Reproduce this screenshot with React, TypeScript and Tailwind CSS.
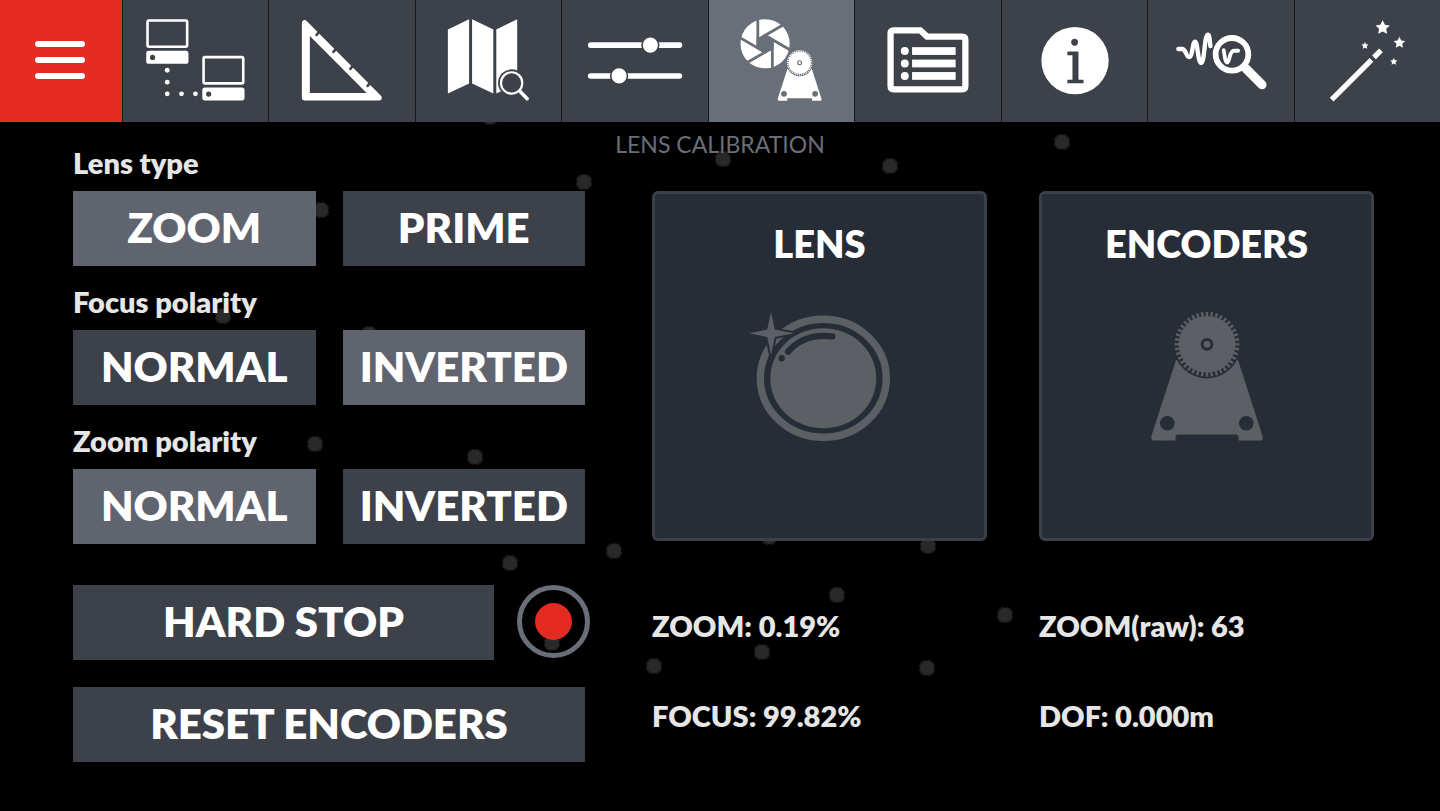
import { useState } from 'react'
import type { ReactNode } from 'react'
import clsx from 'clsx'

type TabId =
  | 'network'
  | 'geometry'
  | 'map'
  | 'settings'
  | 'lens'
  | 'files'
  | 'info'
  | 'analysis'
  | 'wizard'

interface ToggleGroupProps {
  label: string
  options: string[]
  value: string
  onChange: (value: string) => void
}

// Tracking markers of the camera view behind the panel
const MARKERS = [
  [490, 117], [584, 182], [321, 210], [223, 316], [369, 334],
  [315, 444], [475, 457], [510, 563], [614, 551], [552, 643],
  [723, 159], [890, 166], [1062, 142], [769, 537], [928, 546],
  [837, 595], [1005, 615], [762, 652], [654, 666], [927, 668],
]

const STAR = 'M0 -1 L.3 -.38 L.95 -.31 L.47 .15 L.59 .81 L0 .5 L-.59 .81 L-.47 .15 L-.95 -.31 L-.3 -.38 Z'

// Icons share a 146x122 canvas. Cut-outs use currentColor, which is the tab's own background.
function TabIcon({ children }: { children: ReactNode }) {
  return (
    <svg viewBox="0 0 146 122" className="w-full h-full" fill="white" aria-hidden="true">
      {children}
    </svg>
  )
}

function Computer({ x, y }: { x: number; y: number }) {
  return (
    <g transform={`translate(${x} ${y})`}>
      <rect x="1.3" y="1.3" width="39.8" height="26.4" rx="1.5" fill="none" stroke="white" strokeWidth="2.6" />
      <rect x="0" y="31.8" width="42.4" height="13" rx="2.6" />
      <circle cx="6.4" cy="38.4" r="2.6" fill="currentColor" />
    </g>
  )
}

function NetworkIcon() {
  return (
    <TabIcon>
      <Computer x={23.3} y={19} />
      <Computer x={79.6} y={55.8} />
      {[[44.4, 70.3], [44.4, 82.3], [44.4, 94], [58.7, 94], [72.7, 94]].map(([cx, cy]) => (
        <circle key={`${cx}-${cy}`} cx={cx} cy={cy} r="2.4" />
      ))}
    </TabIcon>
  )
}

function GeometryIcon() {
  return (
    <TabIcon>
      <path
        fillRule="evenodd"
        d="M33 22.5a2.7 2.7 0 0 1 4.6 -1.8L112.6 96.2a2.7 2.7 0 0 1 -1.8 4.5H35.5a2.5 2.5 0 0 1 -2.5 -2.5ZM41 36V93H98Z"
      />
      <g stroke="currentColor" strokeWidth="2.6" strokeLinecap="round">
        <path d="M50.5 31.5l-2.8 3.4M67.5 48.5l-2.8 3.4M84.5 65.5l-2.8 3.4M101.8 82.6l-2.8 3.4" />
      </g>
    </TabIcon>
  )
}

function MapIcon() {
  return (
    <TabIcon>
      <path d="M32 29.3L53.3 19V83.7L32 93.7Z" />
      <path d="M56.3 19L77.6 29.3V93.7L56.3 83.7Z" />
      <path d="M80.6 29.3L101.6 19V83.7L80.6 93.7Z" />
      <circle cx="96" cy="83" r="13.6" fill="currentColor" />
      <circle cx="96" cy="83" r="10.7" fill="none" stroke="white" strokeWidth="2.2" />
      <path d="M104.8 91.8L111.6 98.8" stroke="white" strokeWidth="3.6" strokeLinecap="round" />
    </TabIcon>
  )
}

function SettingsIcon() {
  return (
    <TabIcon>
      <rect x="26" y="42.2" width="94.7" height="5.7" rx="2.8" />
      <rect x="26" y="73.2" width="94.7" height="5.7" rx="2.8" />
      <g stroke="currentColor" strokeWidth="1.6">
        <circle cx="88.7" cy="45" r="8.4" />
        <circle cx="57.3" cy="76" r="8.4" />
      </g>
    </TabIcon>
  )
}

// Geared encoder on its foot, drawn on a 112x129 canvas
function EncoderShape({ cutout }: { cutout: string }) {
  return (
    <>
      <path d="M25 48L0.6 123.5Q-0.8 128.5 3.5 128.5H24.5V125Q24.5 122.5 27 122.5H85Q87.5 122.5 87.5 125V128.5H108.5Q112.8 128.5 111.4 123.5L87 48Z" />
      <g fill={cutout}>
        <circle cx="56" cy="32.8" r="33.6" />
        <circle cx="16.3" cy="111.3" r="7.3" />
        <circle cx="95.3" cy="111.3" r="7.3" />
      </g>
      <circle cx="56" cy="32.3" r="28.4" />
      <circle
        cx="56"
        cy="32.3"
        r="30.2"
        fill="none"
        stroke="var(--shape)"
        strokeWidth="4.4"
        pathLength={80}
        strokeDasharray="1 1"
        strokeDashoffset="0.5"
      />
      <circle cx="56" cy="32.3" r="4.9" fill="none" stroke={cutout} strokeWidth="3" />
    </>
  )
}

function LensIcon() {
  return (
    <TabIcon>
      <g transform="translate(56.3 43.7)">
        <circle r="24.7" />
        <path d="M0 -9.8L8.5 -4.9V4.9L0 9.8L-8.5 4.9V-4.9Z" fill="currentColor" />
        {[0, 60, 120, 180, 240, 300].map((angle) => (
          <path
            key={angle}
            d="M-7.3 -26V4"
            stroke="currentColor"
            strokeWidth="2.8"
            transform={`rotate(${angle})`}
          />
        ))}
      </g>
      <g transform="translate(68.8 49.9) scale(0.396)" className="[--shape:white]">
        <EncoderShape cutout="currentColor" />
      </g>
    </TabIcon>
  )
}

function FilesIcon() {
  return (
    <TabIcon>
      <path
        d="M39 30.2H65.5L72.3 36.5H107.5Q110.8 36.5 110.8 39.8V86.2Q110.8 89.5 107.5 89.5H39Q35.7 89.5 35.7 86.2V33.5Q35.7 30.2 39 30.2Z"
        fill="none"
        stroke="white"
        strokeWidth="6.3"
      />
      {[51, 63.5, 76].map((y) => (
        <g key={y}>
          <circle cx="50" cy={y} r="4" />
          <rect x="57.3" y={y - 3.9} width="43.7" height="7.8" />
        </g>
      ))}
    </TabIcon>
  )
}

function InfoIcon() {
  return (
    <TabIcon>
      <circle cx="73.3" cy="60.7" r="33.8" />
      <text
        x="73.3"
        y="83"
        textAnchor="middle"
        fill="currentColor"
        stroke="currentColor"
        strokeWidth="0.4"
        fontSize="60"
        className="font-['DejaVu_Serif',serif]"
      >
        i
      </text>
    </TabIcon>
  )
}

function AnalysisIcon() {
  return (
    <TabIcon>
      <g fill="none" stroke="white" strokeLinecap="round" strokeLinejoin="round">
        <path
          d="M30.5 49H34C38.5 49 38 57 41.3 57C45 57 44.5 41.5 47.3 41.5C50 41.5 50 63 53.3 63C57 63 56.5 34.5 60 34.5C62 34.5 61.7 40 62.7 46"
          strokeWidth="4.4"
        />
        <path d="M76 50C77 56 77.5 62.5 79.5 62.5C82.5 62.5 81 50.7 86.5 50.7H90.5" strokeWidth="3.8" />
        <circle cx="84.3" cy="54.3" r="16.4" strokeWidth="5.8" />
        <path d="M98 68.3L114.5 84.8" strokeWidth="9" />
      </g>
    </TabIcon>
  )
}

function WizardIcon() {
  return (
    <TabIcon>
      <g stroke="white" strokeWidth="5.3">
        <path d="M36.8 99.8L76.8 59.8" />
        <path d="M79.3 57.3L86.3 50.3" />
      </g>
      <path d={STAR} transform="translate(88 27.6) scale(7.6)" />
      <path d={STAR} transform="translate(104.8 42.7) scale(6.1)" />
      <path d={STAR} transform="translate(70.2 45.7) scale(3.8)" />
      <path d={STAR} transform="translate(99.2 61.7) scale(3.8)" />
    </TabIcon>
  )
}

function LensGlass() {
  return (
    <svg viewBox="0 0 141 129" className="w-[141px] h-[129px]" fill="#5c5f64" aria-hidden="true">
      <ellipse cx="74.3" cy="66.3" rx="63" ry="59" fill="none" stroke="#5c5f64" strokeWidth="7.4" />
      <ellipse cx="74.3" cy="66.3" rx="53" ry="50" />
      <path d="M39 39.7Q55 21 83.3 24.3" fill="none" stroke="#272d37" strokeWidth="6.3" strokeLinecap="round" />
      <circle cx="32.7" cy="46.3" r="3.2" fill="#272d37" />
      <path
        d="M22 0L25.8 17.6L45 21.3L25.8 25L22 43L18.2 25L0 21.3L18.2 17.6Z"
        stroke="#272d37"
        strokeWidth="4"
        paintOrder="stroke"
      />
    </svg>
  )
}

function EncoderGear() {
  return (
    <svg viewBox="0 0 112 129" className="w-[112px] h-[129px] [--shape:#5c5f64]" fill="#5c5f64" aria-hidden="true">
      <EncoderShape cutout="#272d37" />
    </svg>
  )
}

const TABS: { id: TabId; name: string; icon: ReactNode }[] = [
  { id: 'network', name: 'Network', icon: <NetworkIcon /> },
  { id: 'geometry', name: 'Geometry', icon: <GeometryIcon /> },
  { id: 'map', name: 'Map', icon: <MapIcon /> },
  { id: 'settings', name: 'Settings', icon: <SettingsIcon /> },
  { id: 'lens', name: 'Lens calibration', icon: <LensIcon /> },
  { id: 'files', name: 'Files', icon: <FilesIcon /> },
  { id: 'info', name: 'Info', icon: <InfoIcon /> },
  { id: 'analysis', name: 'Analysis', icon: <AnalysisIcon /> },
  { id: 'wizard', name: 'Wizard', icon: <WizardIcon /> },
]

function TrackingMarkers() {
  return (
    <svg
      viewBox="0 0 1440 811"
      preserveAspectRatio="xMidYMid slice"
      className="absolute inset-0 w-full h-full"
      aria-hidden="true"
    >
      {MARKERS.map(([x, y]) => (
        <g key={`${x}-${y}`} transform={`translate(${x} ${y})`}>
          <circle r="7.2" fill="#292929" />
          <circle
            r="7.6"
            fill="none"
            stroke="#222222"
            strokeWidth="1.2"
            pathLength={16}
            strokeDasharray="3.2 0.8"
            strokeDashoffset="-0.4"
          />
        </g>
      ))}
    </svg>
  )
}

function ToggleGroup({ label, options, value, onChange }: ToggleGroupProps) {
  return (
    <div role="group" aria-label={label}>
      <h2 className="text-[29px] leading-8 font-extrabold text-[#e6e6e6] mb-3">{label}</h2>
      <div className="grid grid-cols-2 gap-[27px]">
        {options.map((option) => (
          <button
            key={option}
            aria-pressed={option === value}
            onClick={() => onChange(option)}
            className={clsx(
              'h-[75px] pb-1 text-[42px] leading-none font-extrabold cursor-pointer',
              option === value ? 'bg-[#5f646f]' : 'bg-[#3d4149]'
            )}
          >
            {option}
          </button>
        ))}
      </div>
    </div>
  )
}

function Panel({ title, children }: { title: string; children: ReactNode }) {
  return (
    <button className="h-[350px] pt-6 flex flex-col items-center justify-start gap-11 bg-[#272d37] border-3 border-[#3b3f48] rounded-md cursor-pointer">
      <span className="text-[38px] leading-[50px] font-extrabold">{title}</span>
      {children}
    </button>
  )
}

export default function App() {
  const [activeTab, setActiveTab] = useState<TabId>('lens')
  const [lensType, setLensType] = useState('ZOOM')
  const [focusPolarity, setFocusPolarity] = useState('INVERTED')
  const [zoomPolarity, setZoomPolarity] = useState('NORMAL')
  const [recording, setRecording] = useState(false)

  return (
    <div className="relative min-h-screen bg-black text-white font-[Lato,sans-serif]">
      <TrackingMarkers />

      <nav className="relative flex h-[122px]">
        <button aria-label="Menu" className="w-[122px] pr-0.5 pb-0.5 shrink-0 flex flex-col items-center justify-center gap-[10px] bg-[#e42b22] cursor-pointer">
          <span className="w-[50px] h-[6px] rounded-full bg-white" />
          <span className="w-[50px] h-[6px] rounded-full bg-white" />
          <span className="w-[50px] h-[6px] rounded-full bg-white" />
        </button>
        {TABS.map((tab) => (
          <button
            key={tab.id}
            aria-label={tab.name}
            onClick={() => setActiveTab(tab.id)}
            className={clsx(
              'flex-1 min-w-0 border-l border-[#17181b] cursor-pointer',
              tab.id === activeTab ? 'bg-[#696f79] text-[#696f79]' : 'bg-[#3d4149] text-[#3d4149]'
            )}
          >
            {tab.icon}
          </button>
        ))}
      </nav>

      <div className="relative grid">
        <h1 className="[grid-area:1/1] pt-2 text-center text-[23px] leading-7 text-[#696f79]">LENS CALIBRATION</h1>

        <main className="[grid-area:1/1] grid grid-cols-[512fr_722fr] gap-[67px] pt-[25px] pb-12 pl-[73px] pr-[66px]">
          <section>
            <div className="flex flex-col gap-5">
              <ToggleGroup label="Lens type" options={['ZOOM', 'PRIME']} value={lensType} onChange={setLensType} />
              <ToggleGroup label="Focus polarity" options={['NORMAL', 'INVERTED']} value={focusPolarity} onChange={setFocusPolarity} />
              <ToggleGroup label="Zoom polarity" options={['NORMAL', 'INVERTED']} value={zoomPolarity} onChange={setZoomPolarity} />
            </div>

            <div className="mt-[41px] -mr-[5px] flex gap-[23px]">
              <button className="flex-1 h-[75px] pb-1 bg-[#3d4149] text-[42px] leading-none font-extrabold cursor-pointer">
                HARD STOP
              </button>
              <button
                aria-label="Record"
                aria-pressed={recording}
                onClick={() => setRecording(!recording)}
                className="size-[73px] shrink-0 flex items-center justify-center rounded-full border-5 border-[#696f79] cursor-pointer"
              >
                <span className="size-[37px] rounded-full bg-[#e42b22]" />
              </button>
            </div>

            <button className="mt-[27px] w-full h-[75px] pb-1 bg-[#3d4149] text-[42px] leading-none font-extrabold cursor-pointer">
              RESET ENCODERS
            </button>
          </section>

          <section className="pt-11">
            <div className="grid grid-cols-2 gap-x-[52px]">
              <Panel title="LENS">
                <LensGlass />
              </Panel>
              <Panel title="ENCODERS">
                <EncoderGear />
              </Panel>
            </div>
            <div className="mt-[67px] grid grid-cols-2 gap-x-[52px] gap-y-[54px] text-[29px] leading-9 font-extrabold text-[#e6e6e6]">
              <p>ZOOM: 0.19%</p>
              <p>ZOOM(raw): 63</p>
              <p>FOCUS: 99.82%</p>
              <p>DOF: 0.000m</p>
            </div>
          </section>
        </main>
      </div>
    </div>
  )
}
